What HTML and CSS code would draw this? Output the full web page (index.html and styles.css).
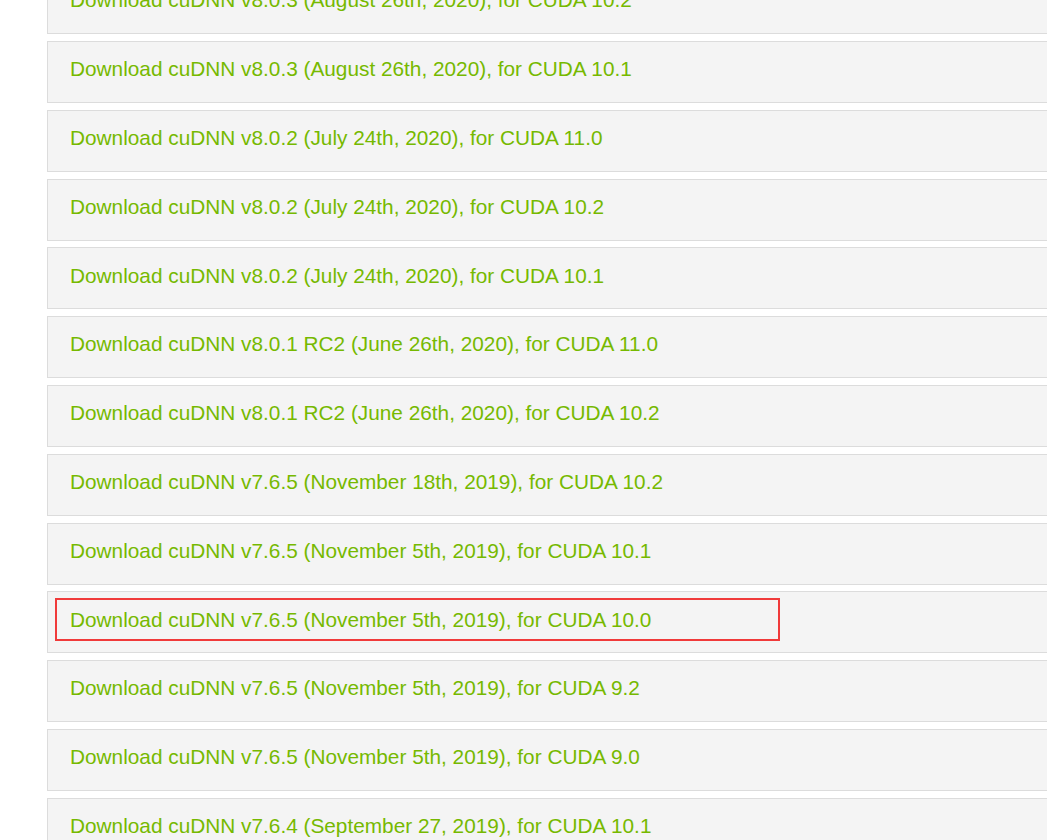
FILE: index.html
```html
<!DOCTYPE html>
<html lang="en">
<head>
<meta charset="utf-8">
<title>cuDNN Archive</title>
<link rel="stylesheet" href="styles.css">
</head>
<body>
<div class="list">
  <div class="row"><a class="dl" href="#">Download cuDNN v8.0.3 (August 26th, 2020), for CUDA 10.2</a></div>
  <div class="row"><a class="dl" href="#">Download cuDNN v8.0.3 (August 26th, 2020), for CUDA 10.1</a></div>
  <div class="row"><a class="dl" href="#">Download cuDNN v8.0.2 (July 24th, 2020), for CUDA 11.0</a></div>
  <div class="row"><a class="dl" href="#">Download cuDNN v8.0.2 (July 24th, 2020), for CUDA 10.2</a></div>
  <div class="row"><a class="dl" href="#">Download cuDNN v8.0.2 (July 24th, 2020), for CUDA 10.1</a></div>
  <div class="row"><a class="dl" href="#">Download cuDNN v8.0.1 RC2 (June 26th, 2020), for CUDA 11.0</a></div>
  <div class="row"><a class="dl" href="#">Download cuDNN v8.0.1 RC2 (June 26th, 2020), for CUDA 10.2</a></div>
  <div class="row"><a class="dl" href="#">Download cuDNN v7.6.5 (November 18th, 2019), for CUDA 10.2</a></div>
  <div class="row"><a class="dl" href="#">Download cuDNN v7.6.5 (November 5th, 2019), for CUDA 10.1</a></div>
  <div class="row"><span class="mark"></span><a class="dl" href="#">Download cuDNN v7.6.5 (November 5th, 2019), for CUDA 10.0</a></div>
  <div class="row"><a class="dl" href="#">Download cuDNN v7.6.5 (November 5th, 2019), for CUDA 9.2</a></div>
  <div class="row"><a class="dl" href="#">Download cuDNN v7.6.5 (November 5th, 2019), for CUDA 9.0</a></div>
  <div class="row"><a class="dl" href="#">Download cuDNN v7.6.4 (September 27, 2019), for CUDA 10.1</a></div>
</div>
</body>
</html>
```
FILE: styles.css
```css
html, body {
  margin: 0;
  padding: 0;
  background: #ffffff;
  overflow: hidden;
}
body {
  font-family: "Liberation Sans", Arial, sans-serif;
}
.list {
  display: flex;
  flex-direction: column;
  gap: 6.8px;
  padding-left: 47px;
  margin-top: -27.8px;
  width: 1100px;
}
.row {
  position: relative;
  box-sizing: border-box;
  height: 62px;
  background: #f4f4f4;
  border: 1px solid #dcdcdc;
  padding: 15.2px 0 0 22px;
}
.dl {
  display: block;
  font-size: 20.8px;
  line-height: 24px;
  color: #76b900;
  text-decoration: none;
  white-space: nowrap;
}
.mark {
  position: absolute;
  left: 7px;
  top: 5.6px;
  width: 725px;
  height: 43px;
  box-sizing: border-box;
  border: 2px solid #f03a3a;
}
```
